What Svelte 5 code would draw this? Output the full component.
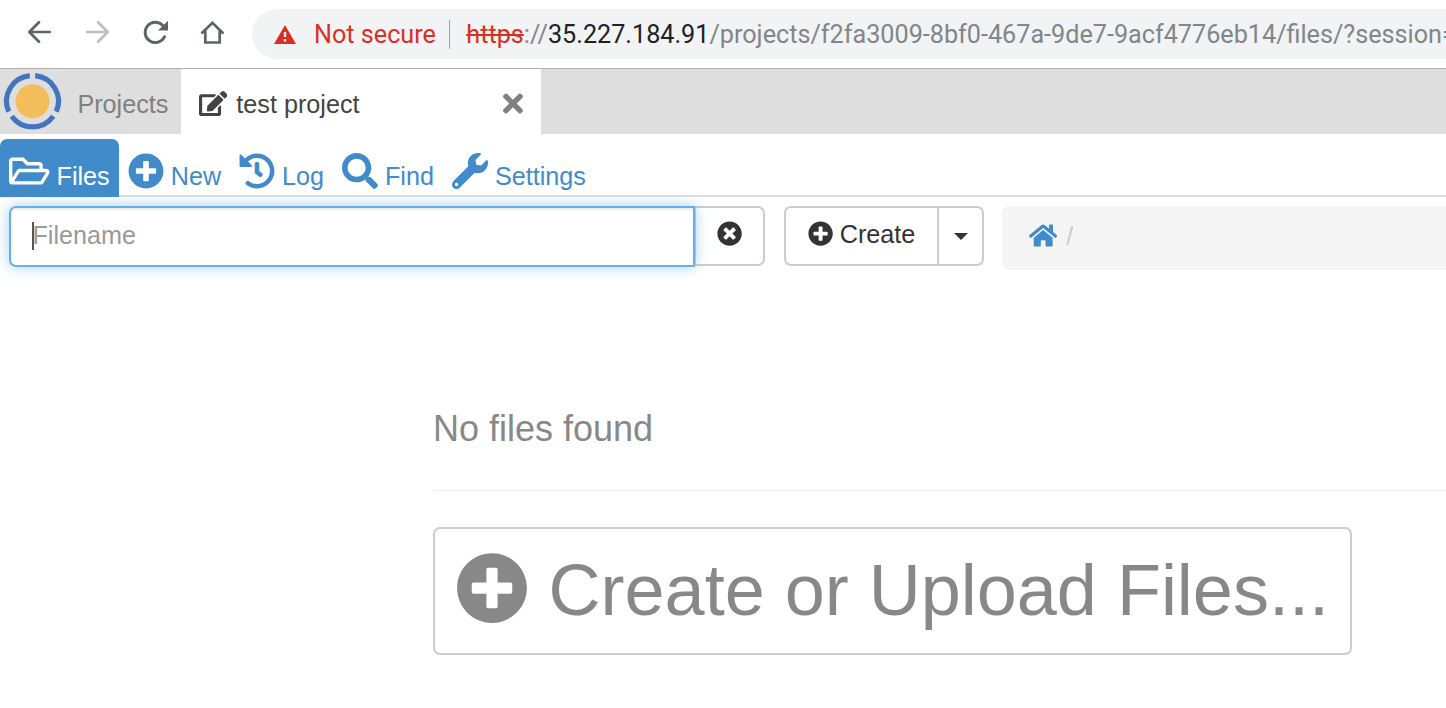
<script>
  const paths = {
    folder: [576, 'M527.9 224H480v-48c0-26.5-21.5-48-48-48H272l-64-64H48C21.5 64 0 85.5 0 112v288c0 26.5 21.5 48 48 48h400c16.5 0 31.9-8.5 40.7-22.6l79.9-128c20-31.9-3-73.4-40.7-73.4zM48 118c0-3.3 2.7-6 6-6h134.1l64 64H426c3.3 0 6 2.7 6 6v42H152c-16.8 0-32.4 8.8-41.1 23.2L48 351.4zm400 282H72l77.2-128H528z'],
    plus: [512, 'M256 8C119 8 8 119 8 256s111 248 248 248 248-111 248-248S393 8 256 8zm144 276c0 6.6-5.4 12-12 12h-92v92c0 6.6-5.4 12-12 12h-56c-6.6 0-12-5.4-12-12v-92h-92c-6.6 0-12-5.4-12-12v-56c0-6.6 5.4-12 12-12h92v-92c0-6.6 5.4-12 12-12h56c6.6 0 12 5.4 12 12v92h92c6.6 0 12 5.4 12 12v56z'],
    clear: [512, 'M256 8C119 8 8 119 8 256s111 248 248 248 248-111 248-248S393 8 256 8zm121.6 313.1c4.7 4.7 4.7 12.3 0 17L338 377.6c-4.7 4.7-12.3 4.7-17 0L256 312l-65.1 65.6c-4.7 4.7-12.3 4.7-17 0L134.4 338c-4.7-4.7-4.7-12.3 0-17l65.6-65-65.6-65.1c-4.7-4.7-4.7-12.3 0-17l39.6-39.6c4.7-4.7 12.3-4.7 17 0l65 65.7 65.1-65.6c4.7-4.7 12.3-4.7 17 0l39.6 39.6c4.7 4.7 4.7 12.3 0 17L312 256l65.6 65.1z'],
    history: [512, 'M504 255.531c.253 136.64-111.18 248.372-247.82 248.468-59.015.042-113.223-20.53-155.822-54.911-11.077-8.94-11.905-25.541-1.839-35.607l11.267-11.267c8.609-8.609 22.353-9.551 31.891-1.984C173.062 425.135 212.781 440 256 440c101.705 0 184-82.311 184-184 0-101.705-82.311-184-184-184-48.814 0-93.149 18.969-126.068 49.932l50.754 50.754c10.08 10.08 2.941 27.314-11.313 27.314H24c-8.837 0-16-7.163-16-16V38.627c0-14.254 17.234-21.393 27.314-11.314l49.372 49.372C129.209 34.136 189.552 8 256 8c136.81 0 247.747 110.78 248 247.531zm-180.912 78.784l9.823-12.63c8.138-10.463 6.253-25.542-4.21-33.679L288 256.349V152c0-13.255-10.745-24-24-24h-16c-13.255 0-24 10.745-24 24v135.651l65.409 50.874c10.463 8.137 25.541 6.253 33.679-4.21z'],
    search: [512, 'M505 442.7L405.3 343c-4.5-4.5-10.6-7-17-7H372c27.6-35.3 44-79.7 44-128C416 93.1 322.9 0 208 0S0 93.1 0 208s93.1 208 208 208c48.3 0 92.7-16.4 128-44v16.3c0 6.4 2.5 12.5 7 17l99.7 99.7c9.4 9.4 24.6 9.4 33.9 0l28.3-28.3c9.4-9.4 9.4-24.6.1-34zM208 336c-70.7 0-128-57.2-128-128 0-70.7 57.2-128 128-128 70.7 0 128 57.2 128 128 0 70.7-57.2 128-128 128z'],
    wrench: [512, 'M507.73 109.1c-2.24-9.03-13.54-12.09-20.12-5.51l-74.36 74.36-67.88-11.31-11.31-67.88 74.36-74.36c6.62-6.62 3.43-17.9-5.66-20.16-47.38-11.74-99.55.91-136.58 37.93-39.64 39.64-50.55 97.1-34.05 147.2L18.74 402.76c-24.99 24.99-24.99 65.51 0 90.5 24.99 24.99 65.51 24.99 90.5 0l213.21-213.21c50.12 16.71 107.47 5.68 147.37-34.22 37.07-37.07 49.7-89.32 37.91-136.73zM64 472c-13.25 0-24-10.75-24-24 0-13.26 10.75-24 24-24s24 10.74 24 24c0 13.25-10.75 24-24 24z'],
    edit: [576, 'M402.6 83.2l90.2 90.2c3.8 3.8 3.8 10 0 13.8L274.4 405.6l-92.8 10.3c-12.4 1.4-22.9-9.1-21.5-21.5l10.3-92.8L388.8 83.2c3.8-3.8 10-3.8 13.8 0zm162-22.9l-48.8-48.8c-15.2-15.2-39.9-15.2-55.2 0l-35.4 35.4c-3.8 3.8-3.8 10 0 13.8l90.2 90.2c3.8 3.8 10 3.8 13.8 0l35.4-35.4c15.2-15.3 15.2-40 0-55.2zM384 346.2V448H64V128h229.8c3.2 0 6.2-1.3 8.5-3.5l40-40c7.6-7.6 2.2-20.5-8.5-20.5H48C21.5 64 0 85.5 0 112v352c0 26.5 21.5 48 48 48h352c26.5 0 48-21.5 48-48V306.2c0-10.7-12.9-16-20.5-8.5l-40 40c-2.2 2.3-3.5 5.3-3.5 8.5z'],
    home: [576, 'M280.37 148.26L96 300.11V464a16 16 0 0 0 16 16l112.06-.29a16 16 0 0 0 15.92-16V368a16 16 0 0 1 16-16h64a16 16 0 0 1 16 16v95.64a16 16 0 0 0 16 16.05L464 480a16 16 0 0 0 16-16V300L295.67 148.26a12.19 12.19 0 0 0-15.3 0zM571.6 251.47L488 182.56V44.05a12 12 0 0 0-12-12h-56a12 12 0 0 0-12 12v72.61L318.47 43a48 48 0 0 0-61 0L4.34 251.47a12 12 0 0 0-1.6 16.9l25.5 31A12 12 0 0 0 45.15 301l235.22-193.74a12.19 12.19 0 0 1 15.3 0L530.9 301a12 12 0 0 0 16.9-1.6l25.5-31a12 12 0 0 0-1.7-16.93z'],
    times: [352, 'M242.72 256l100.07-100.07c12.28-12.28 12.28-32.19 0-44.48l-22.24-22.24c-12.28-12.28-32.19-12.28-44.48 0L176 189.28 75.93 89.21c-12.28-12.28-32.19-12.28-44.48 0L9.21 111.45c-12.28 12.28-12.28 32.19 0 44.48L109.28 256 9.21 356.07c-12.28 12.28-12.28 32.19 0 44.48l22.24 22.24c12.28 12.28 32.2 12.28 44.48 0L176 322.72l100.07 100.07c12.28 12.28 32.2 12.28 44.48 0l22.24-22.24c12.28-12.28 12.28-32.19 0-44.48L242.72 256z']
  };
  const tabs = [
    { label: 'Files', icon: 'folder', active: true },
    { label: 'New', icon: 'plus' },
    { label: 'Log', icon: 'history' },
    { label: 'Find', icon: 'search' },
    { label: 'Settings', icon: 'wrench' }
  ];
</script>

{#snippet icon(name, size)}
  <svg class="icon" viewBox="0 0 {paths[name][0]} 512" width={(size * paths[name][0]) / 512} height={size}>
    <path fill="currentColor" d={paths[name][1]} />
  </svg>
{/snippet}

<div class="page">
  <header class="browser">
    <svg class="controls" width="252" height="68" viewBox="0 0 252 68" fill="none" stroke="#5f6368" stroke-width="2.7" stroke-linecap="round" stroke-linejoin="round">
      <path d="M49.8 32H29.4M39 22.2L29.3 32l9.7 9.8" />
      <path stroke="#bcbec1" d="M87.2 32h20.4M98 22.2l9.7 9.8-9.7 9.8" />
      <path stroke-width="2.9" d="M164.6 36.7A10.2 10.2 0 1 1 162.8 25.4" />
      <path fill="#5f6368" stroke="none" d="M168 20.8v9.8h-10z" />
      <path stroke-linejoin="miter" d="M202.2 32.7L212.4 22.8l10.2 9.9M205.3 31v11.5h14.4V31" />
    </svg>
    <div class="address">
      <svg class="warn" width="22" height="19" viewBox="0 0 22 19">
        <path fill="#d93025" d="M11 0l11 19H0z" />
        <path fill="#f1f3f4" d="M9.8 7h2.4v5H9.8zM9.8 14h2.4v2.4H9.8z" />
      </svg>
      <span class="insecure">Not secure</span>
      <span class="rule"></span>
      <span class="url"><s>https</s>://<b>35.227.184.91</b>/projects/f2fa3009-8bf0-467a-9de7-9acf4776eb14/files/?session=</span>
    </div>
  </header>

  <nav class="topbar">
    <svg class="logo" width="66" height="65" viewBox="0 0 66 65">
      <circle cx="32.5" cy="32.2" r="17" fill="#f4bd5c" />
      <g fill="none" stroke="#4474c0" stroke-width="5.2">
        <path d="M35.2 6.7A25.7 25.7 0 0 1 56.3 42.6" />
        <path d="M29.8 6.7A25.7 25.7 0 0 0 8.7 42.6" />
        <path d="M11.7 47.3A25.7 25.7 0 0 0 53.3 47.3" />
      </g>
    </svg>
    <span class="projects">Projects</span>
    <div class="project">
      {@render icon('edit', 25.2)}
      <span class="name">test project</span>
      <span class="close">{@render icon('times', 29)}</span>
    </div>
  </nav>

  <div class="tabs">
    {#each tabs as tab}
      <div class="tab" class:active={tab.active}>
        {@render icon(tab.icon, 36)}
        <span>{tab.label}</span>
      </div>
    {/each}
  </div>

  <div class="tools">
    <div class="field"><i class="caret"></i><span>Filename</span></div>
    <div class="clear">{@render icon('clear', 25.2)}</div>
    <div class="create">
      <div class="main">{@render icon('plus', 25.2)}<span>Create</span></div>
      <div class="drop"><i></i></div>
    </div>
    <div class="crumbs">{@render icon('home', 25.2)}<span>/</span></div>
  </div>

  <main>
    <div class="none">No files found</div>
    <div class="upload">{@render icon('plus', 72)}<span>Create or Upload Files...</span></div>
  </main>
</div>

<style>
  .page {
    width: 1446px;
    height: 708px;
    overflow: hidden;
    background: #fff;
    font: 25.2px/36px 'Liberation Sans', Arial, sans-serif;
    color: #333;
    white-space: nowrap;
  }
  .page * { box-sizing: border-box; }
  svg { display: block; flex: none; }
  .browser {
    display: flex;
    height: 69px;
    border-bottom: 1px solid #b1b1b1;
  }
  .address {
    display: flex;
    flex: 1;
    min-width: 0;
    height: 50px;
    margin-top: 9px;
    padding: 0 0 0 22px;
    align-items: center;
    background: #f1f3f4;
    border-radius: 25px 0 0 25px;
    overflow: hidden;
    font-family: Roboto, sans-serif;
    font-size: 25.2px;
  }
  .warn { margin-top: 1px; }
  .insecure { width: 122px; margin: 2px 13px 0 18px; color: #d93025; }
  .rule { flex: none; width: 1px; height: 29px; background: #9aa0a6; }
  .url { margin: 2px 0 0 16.4px; color: #80868b; }
  .url s { color: #d93025; }
  .url b { font-weight: 400; color: #202124; }
  .topbar { display: flex; height: 65px; background: #dedede; }
  .projects { width: 115px; padding: 17px 0 0 11.4px; color: #808080; }
  .project {
    display: flex;
    width: 360px;
    padding: 0 18px;
    background: #fff;
    color: #434343;
  }
  .project > :global(.icon) { margin-top: 22px; }
  .name { flex: 1; margin: 17px 0 0 9px; }
  .close { margin-top: 20px; color: #808080; }
  .tabs {
    display: flex;
    height: 63px;
    padding-top: 5px;
    border-bottom: 2px solid #ddd;
    color: #428bca;
  }
  .tab {
    display: flex;
    height: 58px;
    padding: 14px 9px 0;
    gap: 7px;
    border-radius: 7px 7px 0 0;
  }
  .tab:nth-child(2) { margin-right: -0.3px; }
  .tab span { margin-top: 5px; }
  .tab.active { margin-right: 0.1px; background: #428bca; color: #fff; }
  .tools { display: flex; align-items: flex-start; padding: 9px 0 0 9px; }
  .field {
    display: flex;
    z-index: 1;
    width: 686px;
    height: 61px;
    padding: 9px 21px;
    border: 2px solid #66afe9;
    border-radius: 7px 0 0 7px;
    box-shadow: inset 0 2px 2px rgba(0, 0, 0, 0.075), 0 0 14px rgba(102, 175, 233, 0.6);
    color: #999;
  }
  .caret { width: 2px; height: 28px; margin: 5px -1.6px 0 0; background: #555; }
  .clear {
    width: 71px;
    height: 60px;
    margin-left: -1px;
    padding: 13.3px 0 0 20.6px;
    border: 2px solid #ccc;
    border-radius: 0 7px 7px 0;
  }
  .create {
    display: flex;
    width: 200px;
    height: 60px;
    margin-left: 19px;
    border: 2px solid #ccc;
    border-radius: 7px;
  }
  .main { display: flex; width: 153px; padding: 8px 0 0 21.5px; gap: 7px; border-right: 2px solid #ccc; }
  .main > :global(.icon) { margin-top: 5.3px; }
  .drop { padding: 25px 0 0 14.5px; }
  .drop i { display: block; border: 7.2px solid transparent; border-top-color: #333; border-bottom: 0; }
  .crumbs {
    display: flex;
    flex: 1;
    height: 64px;
    margin-left: 18px;
    padding: 11px 0 0 27px;
    background: #f5f5f5;
    border-radius: 7px 0 0 7px;
    color: #428bca;
  }
  .crumbs > :global(.icon) { margin-top: 6px; }
  .crumbs span { margin: 1px 0 0 9px; color: #ccc; }
  main { margin-left: 433px; padding-top: 137px; color: #888; }
  .none {
    height: 84px;
    border-bottom: 1px solid #eee;
    font-size: 36px;
    line-height: 44px;
  }
  .upload {
    display: flex;
    width: 919px;
    height: 128px;
    margin-top: 36px;
    padding: 23px 0 0 21px;
    gap: 20.6px;
    border: 2px solid #ccc;
    border-radius: 7px;
    font-size: 72px;
    line-height: 76px;
  }
</style>
